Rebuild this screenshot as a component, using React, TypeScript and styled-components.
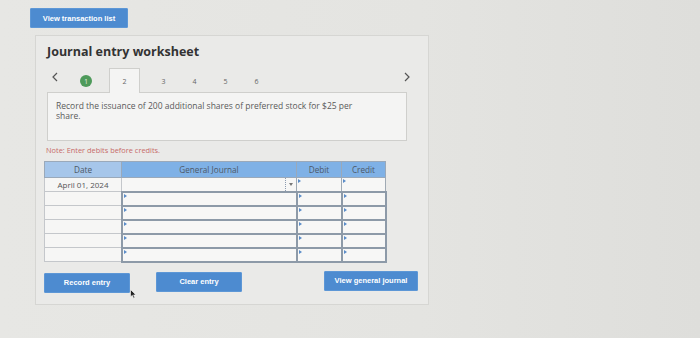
import styled, { createGlobalStyle } from "styled-components";

const Global = createGlobalStyle`
  html, body {
    margin: 0;
    padding: 0;
    background: #e5e5e2;
    font-family: "Open Sans", "Liberation Sans", sans-serif;
  }
`;

const Page = styled.div`
  width: 700px;
  height: 338px;
  overflow: hidden;
  background: linear-gradient(90deg, #e7e7e4 0%, #e4e4e1 60%, #dededb 100%);
  padding: 8px 0 0 30px;
  box-sizing: border-box;
`;

const TopBar = styled.div`
  display: flex;
  height: 20px;
`;

const BlueButton = styled.button<{ $w: number }>`
  display: block;
  width: ${(p) => p.$w}px;
  height: 20px;
  background: #4d8bd0;
  border: 1px solid #5d97d6;
  border-radius: 1px;
  color: #fff;
  font-family: "Liberation Sans", Arial, sans-serif;
  font-weight: bold;
  font-size: 7.5px;
  padding: 0;
  cursor: pointer;
`;

const Panel = styled.div`
  margin: 7px 0 0 5px;
  width: 394px;
  height: 270px;
  box-sizing: border-box;
  background: #eaeae8;
  border: 1px solid #d6d6d3;
  padding: 7px 0 0 11px;
  position: relative;
`;

const Title = styled.h2`
  margin: 0;
  font-size: 12.5px;
  font-weight: bold;
  color: #333;
  line-height: 18px;
`;

const Tabs = styled.div`
  display: flex;
  align-items: flex-end;
  height: 26px;
  margin-top: 5px;
  width: 360px;
  position: relative;
`;

const Chevron = styled.svg<{ $x: number }>`
  position: absolute;
  left: ${(p) => p.$x}px;
  top: 6px;
`;

const Tab = styled.div<{ $active?: boolean; $w?: number }>`
  width: ${(p) => p.$w ?? 31}px;
  height: 25px;
  display: flex;
  align-items: center;
  justify-content: center;
  font-size: 7px;
  color: #666;
  box-sizing: border-box;
  background: ${(p) => (p.$active ? "#f4f4f3" : "transparent")};
  border: 1px solid ${(p) => (p.$active ? "#cfcfcc" : "transparent")};
  border-bottom: none;
  margin-bottom: -1px;
  position: relative;
  z-index: 1;
`;

const Done = styled.span`
  width: 12px;
  height: 12px;
  border-radius: 50%;
  background: #4e9a5a;
  color: #e8f3e8;
  font-size: 6.5px;
  display: flex;
  align-items: center;
  justify-content: center;
`;

const Prompt = styled.div`
  width: 360px;
  height: 49px;
  box-sizing: border-box;
  background: #f4f4f3;
  border: 1px solid #cfcfcc;
  padding: 8px 50px 6px 8px;
  font-size: 8.5px;
  line-height: 10px;
  color: #5a5a5a;
`;

const Note = styled.div`
  margin: 4px 0 0 -1px;
  font-size: 7.4px;
  color: #c76a68;
`;

const Table = styled.table`
  margin: 6px 0 0 -3px;
  table-layout: fixed;
  border-collapse: collapse;
  font-size: 8px;
  color: #555;
`;

const Th = styled.th<{ $w: number; $light?: boolean }>`
  width: ${(p) => p.$w}px;
  height: 15px;
  padding: 0;
  font-size: 8.2px;
  font-weight: normal;
  background: ${(p) => (p.$light ? "#a6c6ea" : "#7fb1e6")};
  border: 1px solid #9aa9ba;
  color: #4d5866;
`;

const DateCell = styled.td`
  height: 13px;
  padding: 0;
  text-align: center;
  background: #f6f6f5;
  border: 1px solid #c4c7cb;
`;

const InputCell = styled.td<{ $first?: boolean }>`
  height: 12px;
  padding: 0;
  background: #f7f7f6;
  border: ${(p) => (p.$first ? "1px solid #a0aab4" : "2px solid #8d9aa8")};
  position: relative;
`;

const JournalFirst = styled.td`
  padding: 0;
  background: #f7f7f6;
  border: 1px solid #a0aab4;
  border-top: 1px dotted #6d8fb8;
  border-bottom: 1px dotted #6d8fb8;
  position: relative;
`;

const Tick = styled.span`
  position: absolute;
  left: 1px;
  top: 1px;
  width: 0;
  height: 0;
  border-top: 2px solid transparent;
  border-bottom: 2px solid transparent;
  border-left: 3px solid #5a8cc8;
`;

const Caret = styled.span`
  position: absolute;
  right: 1px;
  top: 0;
  bottom: 0;
  width: 9px;
  border-left: 1px dotted #8c9bb0;
  display: flex;
  align-items: center;
  justify-content: center;
  &::after {
    content: "";
    border-left: 2px solid transparent;
    border-right: 2px solid transparent;
    border-top: 3px solid #777;
  }
`;

const Actions = styled.div`
  display: flex;
  align-items: flex-start;
  margin: 10px 0 0 -3px;
  position: relative;
`;

const Cursor = styled.svg`
  position: absolute;
  left: 86px;
  top: 16px;
`;

const rows = [1, 2, 3, 4, 5];

export default function App() {
  return (
    <Page>
      <Global />
      <TopBar>
        <BlueButton $w={98}>View transaction list</BlueButton>
      </TopBar>
      <Panel>
        <Title>Journal entry worksheet</Title>
        <Tabs>
          <Chevron $x={5} width="6" height="10" viewBox="0 0 6 10">
            <path d="M5 1 L1 5 L5 9" fill="none" stroke="#555" strokeWidth="1.2" />
          </Chevron>
          <Tab $w={62} style={{ justifyContent: "flex-end", paddingRight: 16 }}>
            <Done>1</Done>
          </Tab>
          <Tab $active>2</Tab>
          <Tab style={{ marginLeft: 8 }}>3</Tab>
          <Tab>4</Tab>
          <Tab>5</Tab>
          <Tab>6</Tab>
          <Chevron $x={357} width="6" height="10" viewBox="0 0 6 10">
            <path d="M1 1 L5 5 L1 9" fill="none" stroke="#555" strokeWidth="1.2" />
          </Chevron>
        </Tabs>
        <Prompt>
          Record the issuance of 200 additional shares of preferred stock for $25 per share.
        </Prompt>
        <Note>Note: Enter debits before credits.</Note>
        <Table>
          <thead>
            <tr>
              <Th $w={76} $light>Date</Th>
              <Th $w={174}>General Journal</Th>
              <Th $w={44}>Debit</Th>
              <Th $w={43}>Credit</Th>
            </tr>
          </thead>
          <tbody>
            <tr>
              <DateCell>April 01, 2024</DateCell>
              <JournalFirst>
                <Caret />
              </JournalFirst>
              <InputCell $first>
                <Tick />
              </InputCell>
              <InputCell $first>
                <Tick />
              </InputCell>
            </tr>
            {rows.map((r) => (
              <tr key={r}>
                <DateCell />
                <InputCell>
                  <Tick />
                </InputCell>
                <InputCell>
                  <Tick />
                </InputCell>
                <InputCell>
                  <Tick />
                </InputCell>
              </tr>
            ))}
          </tbody>
        </Table>
        <Actions>
          <BlueButton $w={86}>Record entry</BlueButton>
          <BlueButton $w={86} style={{ marginLeft: 26, marginTop: -1 }}>
            Clear entry
          </BlueButton>
          <BlueButton $w={94} style={{ marginLeft: 82, marginTop: -2 }}>
            View general journal
          </BlueButton>
          <Cursor width="7" height="10" viewBox="0 0 7 10">
            <path d="M0.5 0.5 L0.5 8 L2.3 6.3 L3.6 9.3 L4.8 8.8 L3.6 5.9 L6 5.9 Z" fill="#222" stroke="#fff" strokeWidth="0.6" />
          </Cursor>
        </Actions>
      </Panel>
    </Page>
  );
}
